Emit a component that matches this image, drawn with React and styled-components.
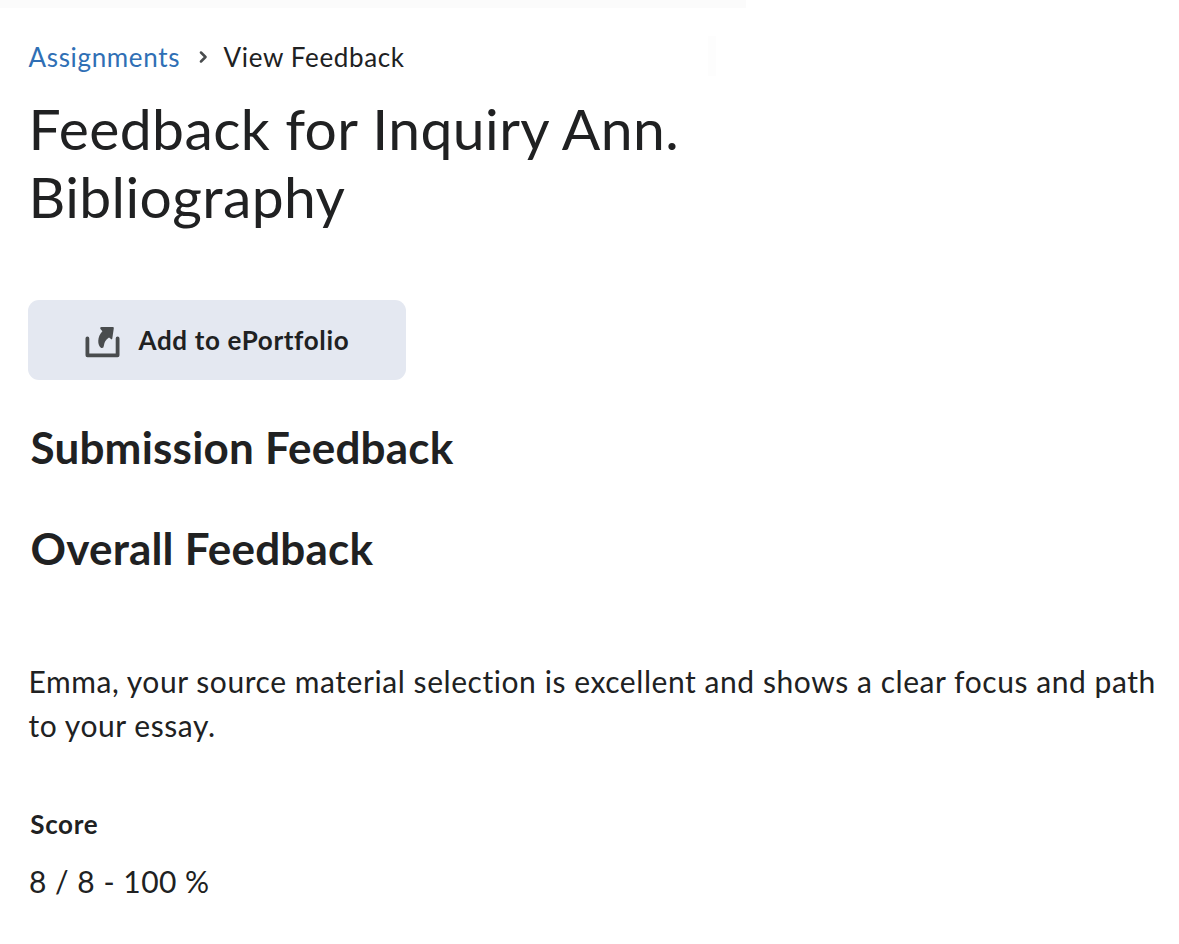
import React from "react";
import styled, { createGlobalStyle } from "styled-components";

const GlobalStyle = createGlobalStyle`
  * { box-sizing: border-box; }
  body { margin: 0; background: #fff; color: #202122; font-family: Lato, "Liberation Sans", sans-serif; }
  h1, h2, h3, p { margin: 0; }
`;
const TopStrip = styled.div`
  width: 746px;
  height: 8px;
  background: #fbfbfb;
`;
const Page = styled.main`
  height: 944px;
  overflow: hidden;
`;
const Content = styled.div`
  padding: 0 20px 0 29px;
`;
const Breadcrumbs = styled.nav`
  display: flex;
  align-items: center;
  width: 687px;
  height: 40px;
  margin-top: 28px;
  padding-top: 2px;
  border-right: 8px solid #fdfdfd;
  font-size: 26px;
  letter-spacing: 0.65px;
`;
const CrumbLink = styled.a`
  margin-left: -0.5px;
  color: #2f6fb5;
`;
const Chevron = styled.svg`
  width: 8px;
  height: 14px;
  margin: 0 16.5px 0 19px;
`;
const Title = styled.h1`
  width: 690px;
  margin: 18px 0 0 -0.5px;
  font-size: 57px;
  font-weight: 400;
  line-height: 68px;
  letter-spacing: 0.42px;
`;
const PortfolioButton = styled.button`
  display: flex;
  align-items: center;
  width: 378px;
  height: 80px;
  margin: 70px 0 0 -1px;
  padding: 0 0 0 57px;
  border: 0;
  border-radius: 11px;
  background: #e4e8f1;
  color: #202122;
  font: 700 26px Lato, sans-serif;
  letter-spacing: 0.65px;
`;
const ShareIcon = styled.svg`
  width: 35px;
  height: 32px;
  margin: 3px 18.5px 0 0;
`;
const Heading = styled.h2`
  margin: ${(p) => p.$top}px 0 0 1.5px;
  font-size: 44px;
  font-weight: 700;
  line-height: 52px;
  letter-spacing: 0.2px;
`;
const Comment = styled.p`
  margin: 85px 0 0 -0.5px;
  font-size: 30px;
  line-height: 44px;
  letter-spacing: 0.56px;
  white-space: nowrap;
`;
const ScoreLabel = styled.h3`
  margin: 61px 0 0 1.3px;
  font-size: 26px;
  line-height: 32px;
  letter-spacing: 0.65px;
`;
const Score = styled.p`
  margin-top: 19px;
  font-size: 30px;
  line-height: 44px;
  letter-spacing: 0.5px;
`;

export default function App() {
  return (
    <Page>
      <GlobalStyle />
      <TopStrip />
      <Content>
        <Breadcrumbs>
          <CrumbLink>Assignments</CrumbLink>
          <Chevron viewBox="0 0 8 14" fill="none" stroke="#494c4e" strokeWidth="2.5" strokeLinecap="round" strokeLinejoin="round">
            <path d="M2 2.5l4.5 4.5L2 11.5" />
          </Chevron>
          <span>View Feedback</span>
        </Breadcrumbs>
        <Title>Feedback for Inquiry Ann.<br />Bibliography</Title>
        <PortfolioButton>
          <ShareIcon viewBox="0 0 35 32">
            <path d="M2.4 12.5V29.3H32.6V12.5" fill="none" stroke="#494c4e" strokeWidth="3.8" strokeLinecap="round" strokeLinejoin="round" />
            <path d="M16.5 1H27.8Q29 1 28.8 2.3L27.3 12.6Q27 14 26 13L24 11.4Q19.1 15 18.9 19.5Q18.7 22.6 16.2 21.9C12.2 19.5 12 10.8 17.4 5.3L15.7 3.3Q14.4 1.5 16.5 1Z" fill="#494c4e" />
          </ShareIcon>
          Add to ePortfolio
        </PortfolioButton>
        <Heading $top={41}>Submission Feedback</Heading>
        <Heading $top={49}>Overall Feedback</Heading>
        <Comment>Emma, your source material selection is excellent and shows a clear focus and path<br />to your essay.</Comment>
        <ScoreLabel>Score</ScoreLabel>
        <Score>8 / 8 - 100 %</Score>
      </Content>
    </Page>
  );
}
